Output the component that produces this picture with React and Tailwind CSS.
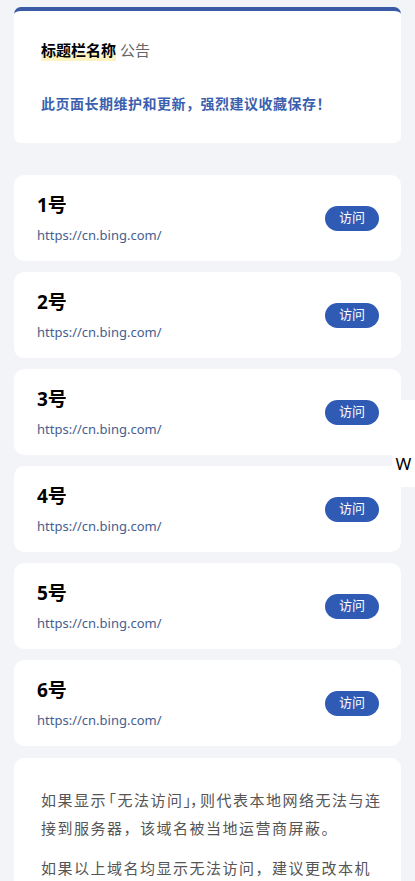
import React from 'react';

const sites = [1, 2, 3, 4, 5, 6].map((n) => ({
  name: `${n}号`,
  url: 'https://cn.bing.com/',
}));

const SiteCard = ({ name, url }) => (
  <div className="bg-white rounded-[10px] h-[86px] pl-[23px] pr-[22px] flex items-center justify-between">
    <div className="flex flex-col">
      <span className="text-[19px] font-bold text-black leading-[26px]">{name}</span>
      <span className="text-[13px] text-[#46608f] leading-[20px] mt-[7px]">{url}</span>
    </div>
    <button className="bg-[#2f5bb5] text-white text-[13px] w-[54px] h-[25px] rounded-full flex items-center justify-center">
      访问
    </button>
  </div>
);

export default function App() {
  return (
    <div
      className="min-h-screen bg-[#f3f4f8] px-[14px] pt-[7px] pb-6 relative"
      style={{ fontFamily: '"Noto Sans", "Noto Sans CJK SC", sans-serif' }}
    >
      {/* Notice */}
      <div className="bg-white rounded-[7px] border-t-[4px] border-[#3b5aa6] pl-[27px] pr-4 pt-[28px] pb-[28px]">
        <div className="flex items-center text-[15px] leading-[22px]">
          <span className="font-bold text-black bg-[linear-gradient(transparent_62%,#fdf3c0_62%)]">标题栏名称</span>
          <span className="text-[#666] ml-1">公告</span>
        </div>
        <p className="mt-[32px] text-[14px] tracking-[0.5px] font-bold text-[#3b5fae] leading-[22px]">
          此页面长期维护和更新，强烈建议收藏保存！
        </p>
      </div>

      {/* Sites */}
      <div className="mt-[32px] flex flex-col gap-[11px]">
        {sites.map((s) => (
          <SiteCard key={s.name} {...s} />
        ))}
      </div>

      {/* Tips */}
      <div className="mt-[12px] bg-white rounded-[10px] pl-[27px] pr-[12px] pt-[28px] pb-6 text-[15px] tracking-[1.5px] text-[#555] leading-[28px]">
        <p className="whitespace-nowrap">
          如果显<span className="tracking-[-4.5px]">示</span>「无法访问<span className="tracking-[-1px]">」</span>
          <span className="tracking-[-5px]">，</span>则代表本地网络无法与连
          <br />
          接到服务器，该域名被当地运营商屏蔽。
        </p>
        <p className="mt-[12px]">如果以上域名均显示无法访问，建议更改本机DNS或使用其他网络环境后再次尝试访问。</p>
      </div>

      {/* side widget */}
      <div className="absolute right-0 top-[400px] w-[23px] h-[87px] bg-white flex items-end justify-center pb-[15px]">
        <span className="text-[17px] text-black leading-none">W</span>
      </div>
    </div>
  );
}
